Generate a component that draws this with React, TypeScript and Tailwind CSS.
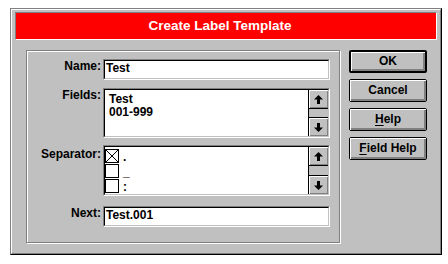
import React from "react";

const Arrow = ({ down = false }: { down?: boolean }) => (
  <svg width="9" height="9" viewBox="0 0 9 9" style={{ transform: down ? "rotate(180deg)" : undefined }}>
    <polygon points="4.5,0 9,4.5 6,4.5 6,9 3,9 3,4.5 0,4.5" fill="black" />
  </svg>
);

const ScrollBar = () => (
  <div className="w-[20px] h-full flex flex-col border-l border-black bg-[#c0c0c0]">
    <div className="h-[18px] flex items-center justify-center shadow-[inset_1px_1px_0_white,inset_-1px_-1px_0_#808080]">
      <Arrow />
    </div>
    <div className="flex-1 border-y border-black bg-[#c0c0c0]" />
    <div className="h-[18px] flex items-center justify-center shadow-[inset_1px_1px_0_white,inset_-1px_-1px_0_#808080]">
      <Arrow down />
    </div>
  </div>
);

const Sunken = ({ className = "", children }: { className?: string; children?: React.ReactNode }) => (
  <div className={`border border-t-[#808080] border-l-[#808080] border-r-white border-b-white ${className}`}>
    <div className="w-full h-full border border-t-black border-l-black border-r-[#c0c0c0] border-b-[#c0c0c0] bg-white">
      {children}
    </div>
  </div>
);

const Button = ({ children, def = false }: { children: React.ReactNode; def?: boolean }) => (
  <div
    className={`w-[78px] h-[23px] rounded-[2px] border-black bg-[#c0c0c0] ${def ? "border-2" : "border"}`}
  >
    <div className="w-full h-full flex items-center justify-center text-[12px] font-bold text-black shadow-[inset_1px_1px_0_white,inset_-2px_-2px_0_#808080] leading-none pb-[1px]">
      {children}
    </div>
  </div>
);

const Check = ({ checked = false }: { checked?: boolean }) => (
  <div className="w-[14px] h-[14px] border border-black bg-white">
    {checked && (
      <svg width="12" height="12" viewBox="0 0 12 12">
        <line x1="0" y1="0" x2="12" y2="12" stroke="black" strokeWidth="1" />
        <line x1="12" y1="0" x2="0" y2="12" stroke="black" strokeWidth="1" />
      </svg>
    )}
  </div>
);

export default function App() {
  return (
    <div className="w-[448px] h-[264px] bg-white pt-[8px] pl-[10px] font-['Liberation_Sans',Arial,sans-serif] text-black">
      <div className="w-[432px] h-[247px] border border-t-[#808080] border-l-[#808080] border-r-black border-b-black">
        <div className="w-full h-full border border-t-white border-l-white border-r-[#808080] border-b-[#808080] bg-[#c0c0c0] flex flex-col">
          {/* Title bar */}
          <div className="mx-[3px] mt-[2px] h-[28px] border border-t-[#808080] border-l-[#808080] border-r-white border-b-white">
            <div className="w-full h-full bg-[#ff0000] flex items-center justify-center pr-[12px]">
              <span className="text-white font-bold text-[13.5px] leading-none">Create Label Template</span>
            </div>
          </div>

          {/* Body */}
          <div className="flex flex-row mt-[10px] pl-[14px]">
            {/* Group box */}
            <div className="w-[314px] h-[193px] border border-[#808080] shadow-[inset_1px_1px_0_white,1px_1px_0_white] pt-[8px] pl-[2px] flex flex-col">
              {/* Name */}
              <div className="flex flex-row items-start gap-[2px]">
                <div className="w-[72px] text-right text-[12px] font-bold leading-[14px]">Name:</div>
                <Sunken className="w-[227px] h-[21px]">
                  <div className="pl-[1px] text-[12px] font-bold leading-[14px]">Test</div>
                </Sunken>
              </div>
              {/* Fields */}
              <div className="flex flex-row items-start gap-[2px] mt-[8px]">
                <div className="w-[72px] text-right text-[12px] font-bold leading-[14px]">Fields:</div>
                <Sunken className="w-[227px] h-[50px]">
                  <div className="flex flex-row h-full">
                    <div className="flex-1 pl-[4px] pt-[3px] text-[12px] font-bold leading-[13px]">
                      <div>Test</div>
                      <div>001-999</div>
                    </div>
                    <ScrollBar />
                  </div>
                </Sunken>
              </div>
              {/* Separator */}
              <div className="flex flex-row items-start gap-[2px] mt-[7px]">
                <div className="w-[72px] text-right text-[12px] font-bold leading-[14px] pt-[2px]">Separator:</div>
                <Sunken className="w-[227px] h-[51px]">
                  <div className="flex flex-row h-full">
                    <div className="flex-1 pt-[1px] text-[12px] font-bold">
                      <div className="flex flex-row items-end h-[15px] gap-[4px]">
                        <Check checked />
                        <span className="leading-[12px]">.</span>
                      </div>
                      <div className="flex flex-row items-end h-[15px] gap-[4px]">
                        <Check />
                        <span className="leading-[12px]">_</span>
                      </div>
                      <div className="flex flex-row items-end h-[15px] gap-[4px]">
                        <Check />
                        <span className="leading-[12px]">:</span>
                      </div>
                    </div>
                    <ScrollBar />
                  </div>
                </Sunken>
              </div>
              {/* Next */}
              <div className="flex flex-row items-start gap-[2px] mt-[10px]">
                <div className="w-[72px] text-right text-[12px] font-bold leading-[14px]">Next:</div>
                <Sunken className="w-[227px] h-[21px]">
                  <div className="pl-[1px] text-[12px] font-bold leading-[14px]">Test.001</div>
                </Sunken>
              </div>
            </div>

            {/* Buttons */}
            <div className="ml-[9px] flex flex-col gap-[6px]">
              <Button def>OK</Button>
              <Button>Cancel</Button>
              <Button>
                <span>
                  <span className="underline underline-offset-2">H</span>elp
                </span>
              </Button>
              <Button>
                <span>
                  <span className="underline underline-offset-2">F</span>ield Help
                </span>
              </Button>
            </div>
          </div>
        </div>
      </div>
    </div>
  );
}
